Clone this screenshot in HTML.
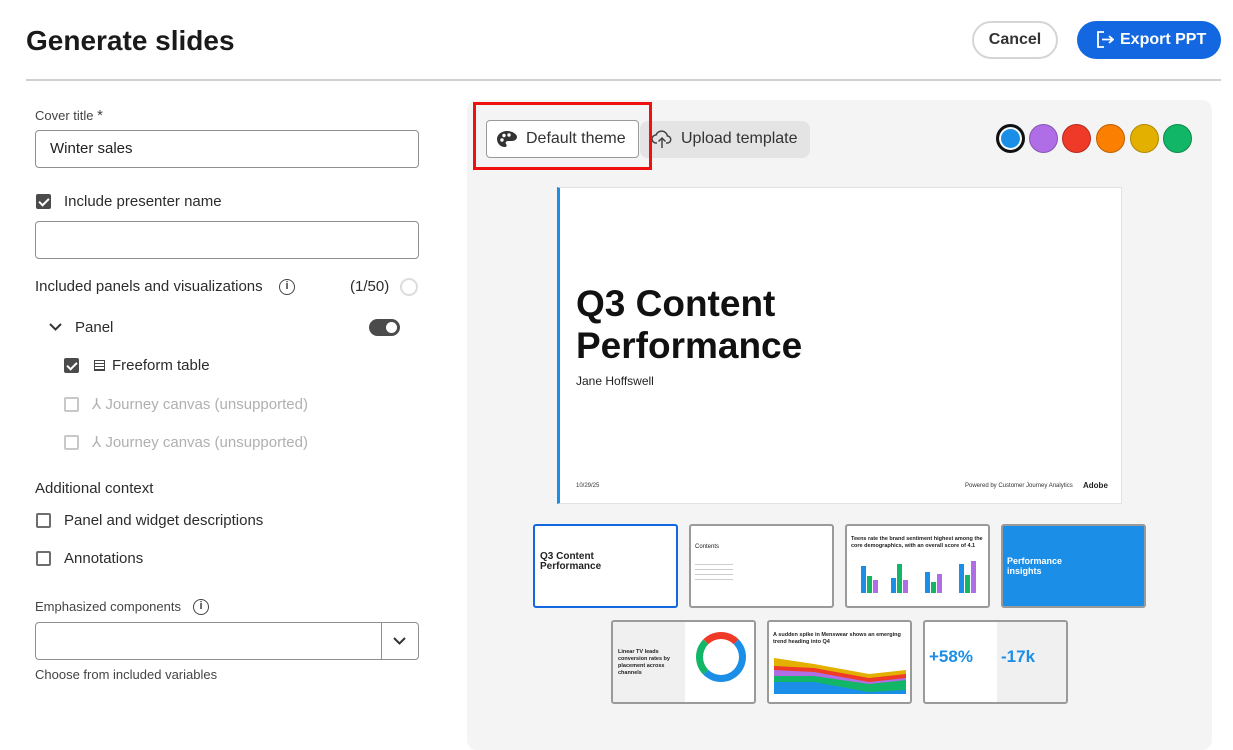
<!DOCTYPE html>
<html><head><meta charset="utf-8"><style>
*{box-sizing:border-box;margin:0;padding:0}
body{width:1233px;height:738px;background:#fff;font-family:"Liberation Sans",sans-serif;color:#222;position:relative;overflow:hidden}
.a{position:absolute}
.t{font-size:15px;color:#2c2c2c}
.inp{position:absolute;border:1px solid #8f8f8f;border-radius:4px;background:#fff}
.cb{position:absolute;width:15px;height:15px;border:2px solid #6e6e6e;border-radius:2px;background:#fff}
.cb.on{background:#4b4b4b;border-color:#4b4b4b}
.cb.on::after{content:"";position:absolute;left:3px;top:0px;width:4px;height:8px;border:solid #fff;border-width:0 2px 2px 0;transform:rotate(45deg)}
.cb.dis{border-color:#c8c8c8}
.dis-t{color:#b0b0b0}
.th{position:absolute;width:145px;height:84px;background:#fff;border:2px solid #9a9a9a;border-radius:3px;overflow:hidden}
.sw{position:absolute;top:124px;width:29px;height:29px;border-radius:50%}
</style></head><body>
<div class="a" style="left:26px;top:25px;font-size:28px;font-weight:bold;color:#1a1a1a">Generate slides</div>
<div class="a" style="left:972px;top:21px;width:86px;height:38px;border:2px solid #d5d5d5;border-radius:19px;font-size:16px;font-weight:bold;color:#333;text-align:center;line-height:34px">Cancel</div>
<div class="a" style="left:1077px;top:21px;width:144px;height:38px;background:#1367e0;border-radius:19px;font-size:16px;font-weight:bold;color:#fff;line-height:38px;padding-left:43px">Export PPT</div>
<svg class="a" style="left:1096px;top:31px" width="18" height="17" viewBox="0 0 18 17"><path d="M8 1H2v15h6M6 8.5h11M13 5l4 3.5-4 3.5" fill="none" stroke="#fff" stroke-width="1.8"/></svg>
<div class="a" style="left:26px;top:79px;width:1195px;height:2px;background:#d0d0d0"></div>

<div class="a" style="left:35px;top:107px;font-size:13px;color:#444">Cover title <span style="font-size:15px">*</span></div>
<div class="inp" style="left:35px;top:130px;width:384px;height:38px"><span class="t" style="position:absolute;left:14px;top:9px;color:#222">Winter sales</span></div>
<div class="cb on" style="left:36px;top:194px"></div>
<div class="a t" style="left:64px;top:193px">Include presenter name</div>
<div class="inp" style="left:35px;top:221px;width:384px;height:38px"></div>
<div class="a t" style="left:35px;top:278px">Included panels and visualizations</div>
<div class="a" style="left:279px;top:279px;width:16px;height:16px;border:1.5px solid #444;border-radius:50%;font-size:11px;text-align:center;line-height:13px;font-weight:bold;color:#444">i</div>
<div class="a t" style="left:350px;top:278px">(1/50)</div>
<div class="a" style="left:400px;top:278px;width:18px;height:18px;border:2px solid #ddd;border-radius:50%"></div>
<svg class="a" style="left:49px;top:322px" width="13" height="10"><path d="M1 2l5.5 5.5L12 2" fill="none" stroke="#333" stroke-width="2"/></svg>
<div class="a t" style="left:75px;top:319px">Panel</div>
<div class="a" style="left:369px;top:319px;width:31px;height:17px;background:#4b4b4b;border-radius:9px"><div style="position:absolute;right:3px;top:3px;width:11px;height:11px;background:#fff;border-radius:50%"></div></div>
<div class="cb on" style="left:64px;top:358px"></div>
<div class="a" style="left:94px;top:360px;width:11px;height:11px;border:1.5px solid #444;background:repeating-linear-gradient(#fff 0 2px,#444 2px 3px)"></div>
<div class="a t" style="left:112px;top:357px">Freeform table</div>
<div class="cb dis" style="left:64px;top:397px"></div>
<div class="a t dis-t" style="left:92px;top:395px">⅄ Journey canvas (unsupported)</div>
<div class="cb dis" style="left:64px;top:435px"></div>
<div class="a t dis-t" style="left:92px;top:433px">⅄ Journey canvas (unsupported)</div>
<div class="a t" style="left:35px;top:480px">Additional context</div>
<div class="cb" style="left:36px;top:513px"></div>
<div class="a t" style="left:64px;top:512px">Panel and widget descriptions</div>
<div class="cb" style="left:36px;top:551px"></div>
<div class="a t" style="left:64px;top:550px">Annotations</div>
<div class="a" style="left:35px;top:599px;font-size:13px;color:#444">Emphasized components</div>
<div class="a" style="left:193px;top:599px;width:16px;height:16px;border:1.5px solid #444;border-radius:50%;font-size:11px;text-align:center;line-height:13px;font-weight:bold;color:#444">i</div>
<div class="inp" style="left:35px;top:622px;width:384px;height:38px"><div style="position:absolute;left:345px;top:0;width:1px;height:36px;background:#8f8f8f"></div></div>
<svg class="a" style="left:393px;top:636px" width="13" height="10"><path d="M1 2l5.5 5.5L12 2" fill="none" stroke="#333" stroke-width="2"/></svg>
<div class="a" style="left:35px;top:667px;font-size:13px;color:#444">Choose from included variables</div>

<div class="a" style="left:467px;top:100px;width:745px;height:650px;background:#f4f4f4;border-radius:10px"></div>
<div class="a" style="left:640px;top:121px;width:170px;height:37px;background:#e4e4e4;border-radius:8px"></div>
<svg class="a" style="left:651px;top:129px" width="22" height="20" viewBox="0 0 22 20"><path d="M6 14H5a4 4 0 0 1 0-8 6 6 0 0 1 11.5 1A3.5 3.5 0 0 1 16 14h-1M11 19V9M7.5 12.5L11 9l3.5 3.5" fill="none" stroke="#444" stroke-width="1.5"/></svg>
<div class="a" style="left:681px;top:130px;font-size:16px;color:#333">Upload template</div>
<div class="a" style="left:486px;top:120px;width:153px;height:38px;background:#fff;border:1px solid #999;border-radius:4px"></div>
<svg class="a" style="left:496px;top:130px" width="22" height="18" viewBox="0 0 22 18"><path d="M11 1C5 1 1 5 1 9s3 8 8 8c2 0 2-2 1-3s0-3 2-3h4c3 0 5-2 5-4C21 4 16 1 11 1z" fill="#333"/><circle cx="6" cy="10" r="1.7" fill="#fff"/><circle cx="8" cy="5.5" r="1.7" fill="#fff"/><circle cx="13" cy="5" r="1.7" fill="#fff"/></svg>
<div class="a" style="left:526px;top:130px;font-size:16px;color:#333">Default theme</div>
<div class="a" style="left:473px;top:102px;width:179px;height:68px;border:3px solid #f01010"></div>

<div class="sw" style="left:996px;background:#1b8fe8;border:3px solid #111;box-shadow:inset 0 0 0 2px #fff"></div>
<div class="sw" style="left:1029px;background:#b06ee6;border:1px solid #8a55b5"></div>
<div class="sw" style="left:1062px;background:#ef3a27;border:1px solid #b52a1c"></div>
<div class="sw" style="left:1096px;background:#fb7f00;border:1px solid #c06000"></div>
<div class="sw" style="left:1130px;background:#e4b000;border:1px solid #b08800"></div>
<div class="sw" style="left:1163px;background:#12b667;border:1px solid #0c8a4c"></div>

<div class="a" style="left:557px;top:187px;width:565px;height:317px;background:#fff;border:1px solid #e2e2e2;border-left:3px solid #1b8fe8">
<div style="position:absolute;left:16px;top:95px;font-size:37px;font-weight:bold;line-height:42px;color:#111">Q3 Content<br>Performance</div>
<div style="position:absolute;left:16px;top:186px;font-size:12px;color:#222">Jane Hoffswell</div>
<div style="position:absolute;left:16px;top:295px;font-size:6px;color:#333">10/29/25</div>
<div style="position:absolute;left:405px;top:295px;font-size:6px;color:#333">Powered by Customer Journey Analytics</div>
<div style="position:absolute;left:523px;top:293px;font-size:8px;font-weight:bold;color:#222">Adobe</div>
</div>

<div class="th" style="left:533px;top:524px;border-color:#1367e0"><div style="position:absolute;left:5px;top:26px;font-size:10px;line-height:10px;font-weight:bold;color:#222">Q3 Content<br>Performance</div></div>
<div class="th" style="left:689px;top:524px"><div style="position:absolute;left:4px;top:18px;font-size:6px">Contents</div><div style="position:absolute;left:4px;top:34px;width:38px;height:24px;background:repeating-linear-gradient(#fff 0 4px,#ccc 4px 5px)"></div></div>
<div class="th" style="left:845px;top:524px"><div style="position:absolute;left:4px;top:10px;font-size:5.5px;line-height:7px;font-weight:bold">Teens rate the brand sentiment highest among the core demographics, with an overall score of 4.1</div>
<svg style="position:absolute;left:8px;top:30px" width="128" height="40"><g><rect x="6" y="10" width="5" height="27" fill="#1b8fe8"/><rect x="12" y="20" width="5" height="17" fill="#12b667"/><rect x="18" y="24" width="5" height="13" fill="#b06ee6"/><rect x="36" y="22" width="5" height="15" fill="#1b8fe8"/><rect x="42" y="8" width="5" height="29" fill="#12b667"/><rect x="48" y="24" width="5" height="13" fill="#b06ee6"/><rect x="70" y="16" width="5" height="21" fill="#1b8fe8"/><rect x="76" y="26" width="5" height="11" fill="#12b667"/><rect x="82" y="18" width="5" height="19" fill="#b06ee6"/><rect x="104" y="8" width="5" height="29" fill="#1b8fe8"/><rect x="110" y="19" width="5" height="18" fill="#12b667"/><rect x="116" y="5" width="5" height="32" fill="#b06ee6"/></g></svg></div>
<div class="th" style="left:1001px;top:524px;background:#1b8fe8"><div style="position:absolute;left:4px;top:30px;font-size:9px;line-height:10px;font-weight:bold;color:#fff">Performance<br>insights</div></div>
<div class="th" style="left:611px;top:620px"><div style="position:absolute;left:0;top:0;width:72px;height:84px;background:#f0f0f0"></div><div style="position:absolute;left:5px;top:27px;font-size:5.5px;line-height:7px;font-weight:bold">Linear TV leads<br>conversion rates by<br>placement across<br>channels</div><div style="position:absolute;left:83px;top:10px;width:50px;height:50px;border-radius:50%;border:7px solid #1b8fe8;border-left-color:#12b667;border-top-color:#ef3a27"></div></div>
<div class="th" style="left:767px;top:620px"><div style="position:absolute;left:4px;top:10px;font-size:5.5px;line-height:7px;font-weight:bold">A sudden spike in Menswear shows an emerging trend heading into Q4</div>
<svg style="position:absolute;left:5px;top:30px" width="135" height="42"><path d="M0 6L40 12 95 22 132 18V42H0z" fill="#e4b000"/><path d="M0 14L40 16 95 26 132 22V42H0z" fill="#ef3a27"/><path d="M0 18L40 20 95 30 132 26V42H0z" fill="#b06ee6"/><path d="M0 24L40 24 95 32 132 28V42H0z" fill="#12b667"/><path d="M0 30L40 30 95 40 132 38V42H0z" fill="#1b8fe8"/></svg></div>
<div class="th" style="left:923px;top:620px"><div style="position:absolute;left:72px;top:0;width:73px;height:84px;background:#f0f0f0"></div><div style="position:absolute;left:4px;top:25px;font-size:17px;color:#1b8fe8;font-weight:bold">+58%</div><div style="position:absolute;left:76px;top:25px;font-size:17px;color:#1b8fe8;font-weight:bold">-17k</div></div>
</body></html>
